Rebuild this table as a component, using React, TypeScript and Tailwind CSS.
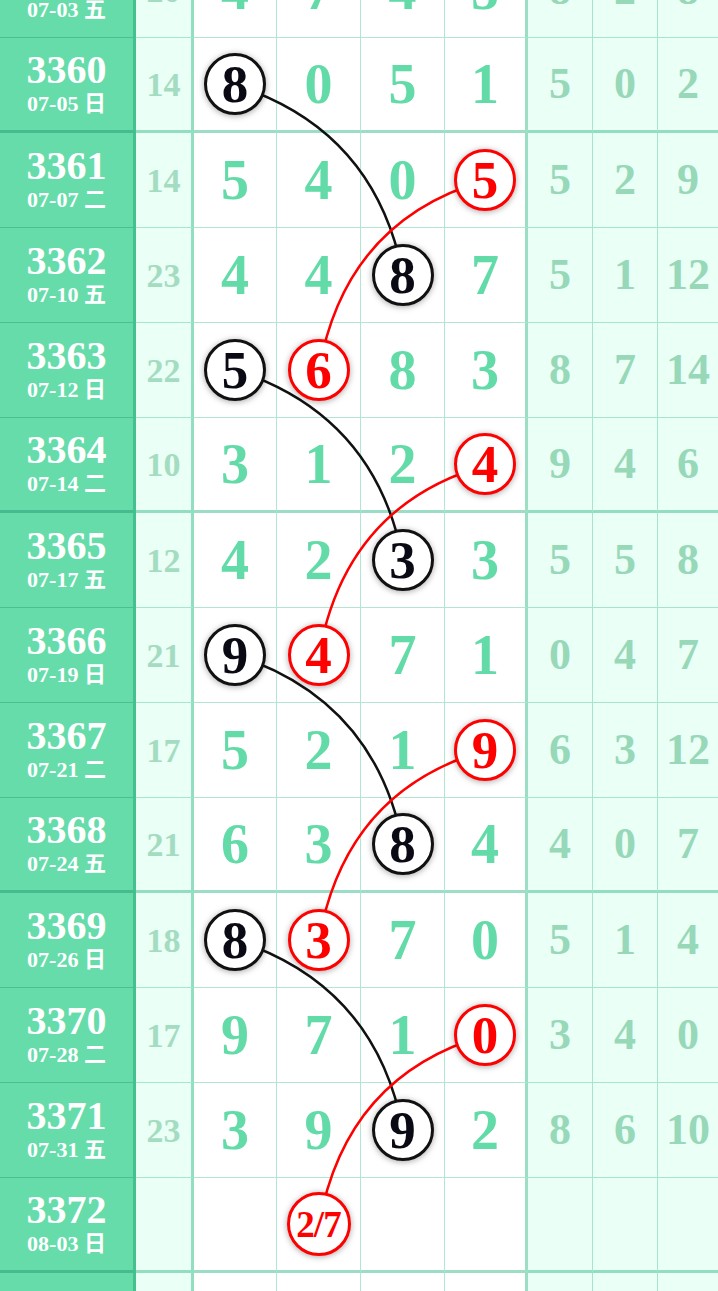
type Mark = { idx: number; color: 'black' | 'red'; text?: string };
type Row = {
  issue: string;
  date: string;
  sum: string;
  nums: (number | null)[];
  tail: string[];
  marks: Mark[];
};

const rows: Row[] = [
  { issue: '3359', date: '07-03 五', sum: '20', nums: [4, 7, 4, 5], tail: ['8', '2', '8'], marks: [] },
  { issue: '3360', date: '07-05 日', sum: '14', nums: [8, 0, 5, 1], tail: ['5', '0', '2'], marks: [{ idx: 0, color: 'black' }] },
  { issue: '3361', date: '07-07 二', sum: '14', nums: [5, 4, 0, 5], tail: ['5', '2', '9'], marks: [{ idx: 3, color: 'red' }] },
  { issue: '3362', date: '07-10 五', sum: '23', nums: [4, 4, 8, 7], tail: ['5', '1', '12'], marks: [{ idx: 2, color: 'black' }] },
  { issue: '3363', date: '07-12 日', sum: '22', nums: [5, 6, 8, 3], tail: ['8', '7', '14'], marks: [{ idx: 0, color: 'black' }, { idx: 1, color: 'red' }] },
  { issue: '3364', date: '07-14 二', sum: '10', nums: [3, 1, 2, 4], tail: ['9', '4', '6'], marks: [{ idx: 3, color: 'red' }] },
  { issue: '3365', date: '07-17 五', sum: '12', nums: [4, 2, 3, 3], tail: ['5', '5', '8'], marks: [{ idx: 2, color: 'black' }] },
  { issue: '3366', date: '07-19 日', sum: '21', nums: [9, 4, 7, 1], tail: ['0', '4', '7'], marks: [{ idx: 0, color: 'black' }, { idx: 1, color: 'red' }] },
  { issue: '3367', date: '07-21 二', sum: '17', nums: [5, 2, 1, 9], tail: ['6', '3', '12'], marks: [{ idx: 3, color: 'red' }] },
  { issue: '3368', date: '07-24 五', sum: '21', nums: [6, 3, 8, 4], tail: ['4', '0', '7'], marks: [{ idx: 2, color: 'black' }] },
  { issue: '3369', date: '07-26 日', sum: '18', nums: [8, 3, 7, 0], tail: ['5', '1', '4'], marks: [{ idx: 0, color: 'black' }, { idx: 1, color: 'red' }] },
  { issue: '3370', date: '07-28 二', sum: '17', nums: [9, 7, 1, 0], tail: ['3', '4', '0'], marks: [{ idx: 3, color: 'red' }] },
  { issue: '3371', date: '07-31 五', sum: '23', nums: [3, 9, 9, 2], tail: ['8', '6', '10'], marks: [{ idx: 2, color: 'black' }] },
  { issue: '3372', date: '08-03 日', sum: '', nums: [null, null, null, null], tail: ['', '', ''], marks: [{ idx: 1, color: 'red', text: '2/7' }] },
  { issue: '', date: '', sum: '', nums: [null, null, null, null], tail: ['', '', ''], marks: [] },
];

const ROW_H = 95;
const numCenters = [235.5, 319, 403, 486.5];

function Ball({ mark, value }: { mark: Mark; value: string }) {
  const red = mark.color === 'red';
  const small = value.length > 1;
  return (
    <div
      className={`relative z-10 flex items-center justify-center rounded-full border-[3px] bg-white shadow-[0_1px_6px_rgba(0,0,0,0.35)] ${
        small ? 'h-[64px] w-[64px]' : 'h-[62px] w-[62px]'
      } ${red ? 'border-[#ff0000] text-[#ff0000]' : 'border-[#111] text-[#0a0a14]'}`}
    >
      <span className={small ? 'text-[37px] leading-none tracking-[-1px]' : 'text-[53px] leading-none'}>{value}</span>
    </div>
  );
}

function Curves() {
  const paths: { d: string; color: string }[] = [];
  rows.forEach((r, j) => {
    const y0 = j * ROW_H + 47;
    r.marks.forEach((m) => {
      if (j + 2 >= rows.length) return;
      if (m.color === 'black' && m.idx === 0) {
        const x0 = numCenters[0];
        paths.push({ d: `M ${x0} ${y0} Q ${x0 + 140} ${y0 + 45} ${numCenters[2]} ${y0 + 190}`, color: '#111' });
      }
      if (m.color === 'red' && m.idx === 3) {
        const x0 = numCenters[3];
        paths.push({ d: `M ${x0} ${y0} Q ${x0 - 141} ${y0 + 40} ${numCenters[1]} ${y0 + 190}`, color: '#ff0000' });
      }
    });
  });
  return (
    <svg className="pointer-events-none absolute left-0 top-0 z-[5]" width={718} height={rows.length * ROW_H}>
      {paths.map((p, i) => (
        <path key={i} d={p.d} fill="none" stroke={p.color} strokeWidth={2.5} />
      ))}
    </svg>
  );
}

export default function App() {
  return (
    <div className="h-[1291px] w-[718px] overflow-hidden bg-white font-['Liberation_Serif','Noto_Sans_CJK_SC',serif] font-bold">
      <div className="relative -mt-[57px]">
        {rows.map((r, j) => {
          const thick = r.issue !== '' && Number(r.issue) % 4 === 0;
          const bb = thick ? 'border-b-[3px] border-b-[rgba(60,190,140,0.5)]' : 'border-b border-b-[rgba(70,196,146,0.42)]';
          const bbLead = thick ? 'border-b-[3px] border-b-[rgba(30,150,105,0.45)]' : 'border-b border-b-[rgba(30,150,105,0.4)]';
          return (
            <div key={j} className="grid h-[95px] grid-cols-[136px_58px_83px_84px_84px_83px_65px_65px_60px]">
              <div className={`flex flex-col items-center justify-center border-r-[3px] border-r-[rgba(30,160,110,0.45)] bg-[#66dcab] text-white ${bbLead}`}>
                <div className="text-[40px] leading-[40px]">{r.issue}</div>
                <div className="text-[22px] leading-[28px]">{r.date}</div>
              </div>
              <div className={`flex items-center justify-center border-r-[3px] border-r-[rgba(60,190,140,0.5)] bg-[#eafff5] text-[34px] text-[#a4dcc1] ${bb}`}>
                {r.sum}
              </div>
              {r.nums.map((n, i) => {
                const mark = r.marks.find((m) => m.idx === i);
                return (
                  <div
                    key={i}
                    className={`flex items-center justify-center bg-white text-[56px] leading-none text-[#63dba8] ${bb} ${
                      i === 3 ? 'border-r-[3px] border-r-[rgba(60,190,140,0.5)]' : 'border-r border-r-[rgba(70,196,146,0.42)]'
                    }`}
                  >
                    {mark ? <Ball mark={mark} value={mark.text ?? String(n)} /> : n === null ? '' : n}
                  </div>
                );
              })}
              {r.tail.map((t, i) => (
                <div
                  key={i}
                  className={`flex items-center justify-center bg-[#eafff5] text-[44px] leading-none text-[#97d8b9] ${bb} ${
                    i < 2 ? 'border-r border-r-[rgba(70,196,146,0.42)]' : ''
                  } ${t.length > 1 ? 'text-[38px]' : ''}`}
                >
                  {t}
                </div>
              ))}
            </div>
          );
        })}
        <Curves />
      </div>
    </div>
  );
}
